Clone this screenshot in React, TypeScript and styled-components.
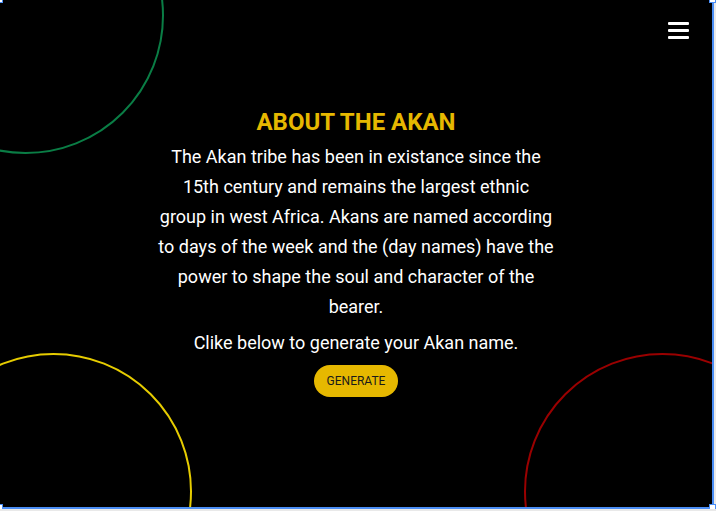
import React from "react";
import styled, { createGlobalStyle } from "styled-components";

const Global = createGlobalStyle`
  html, body { margin: 0; padding: 0; background: #e9e9e9; }
  body { font-family: Roboto, "Liberation Sans", sans-serif; }
`;

const Frame = styled.div`
  position: relative;
  width: 712px;
  height: 507px;
  border-right: 2px solid #4b8ef5;
  border-bottom: 2px solid #4b8ef5;
`;

const Canvas = styled.div`
  position: relative;
  width: 100%;
  height: 100%;
  background: #000;
  overflow: hidden;
  display: flex;
  flex-direction: column;
`;

const Ring = styled.div<{ $color: string; $left: number; $top: number }>`
  position: absolute;
  left: ${(p) => p.$left}px;
  top: ${(p) => p.$top}px;
  width: 277px;
  height: 277px;
  border-radius: 50%;
  border: 2px solid ${(p) => p.$color};
  box-sizing: border-box;
  pointer-events: none;
`;

const Handle = styled.div<{ $x: string; $y: string }>`
  position: absolute;
  ${(p) => p.$x}: -4px;
  ${(p) => p.$y}: -4px;
  width: 5px;
  height: 5px;
  background: #fff;
  border: 1px solid #4b8ef5;
  z-index: 2;
`;

const Nav = styled.header`
  position: relative;
  z-index: 1;
  display: flex;
  justify-content: flex-end;
  padding: 22px 23px 0 0;
  height: 40px;
`;

const Burger = styled.button`
  display: flex;
  flex-direction: column;
  gap: 4px;
  padding: 0;
  background: none;
  border: none;
  cursor: pointer;
`;

const Bar = styled.span`
  display: block;
  width: 21px;
  height: 3px;
  background: #fff;
  border-radius: 1px;
`;

const Main = styled.main`
  position: relative;
  z-index: 1;
  display: flex;
  flex-direction: column;
  align-items: center;
  margin-top: 46px;
  text-align: center;
`;

const Title = styled.h1`
  margin: 0;
  font-size: 24px;
  line-height: 28px;
  font-weight: 700;
  color: #e6b800;
`;

const Text = styled.p`
  margin: 6px 0 0;
  width: 396px;
  font-size: 18px;
  line-height: 30px;
  color: #fff;
`;

const Button = styled.button`
  margin-top: 7px;
  height: 32px;
  padding: 0 13px;
  border: none;
  border-radius: 16px;
  background: #e6b800;
  color: #1a1a1a;
  font-family: Roboto, "Liberation Sans", sans-serif;
  font-size: 12px;
  cursor: pointer;
`;

export default function App() {
  return (
    <>
      <Global />
      <Frame>
        <Canvas>
          <Ring $color="#0a7d45" $left={-113} $top={-123} />
          <Ring $color="#e6cc00" $left={-85} $top={353} />
          <Ring $color="#9a0000" $left={524} $top={353} />
          <Nav>
            <Burger aria-label="menu">
              <Bar />
              <Bar />
              <Bar />
            </Burger>
          </Nav>
          <Main>
            <Title>ABOUT THE AKAN</Title>
            <Text>
              The Akan tribe has been in existance since the 15th century and
              remains the largest ethnic group in west Africa. Akans are named
              according to days of the week and the (day names) have the power
              to shape the soul and character of the bearer.
            </Text>
            <Text>Clike below to generate your Akan name.</Text>
            <Button>GENERATE</Button>
          </Main>
        </Canvas>
        <Handle $x="left" $y="top" />
        <Handle $x="right" $y="top" />
        <Handle $x="left" $y="bottom" />
        <Handle $x="right" $y="bottom" />
      </Frame>
    </>
  );
}
